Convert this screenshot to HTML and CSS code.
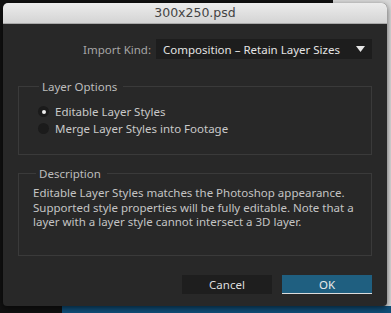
FILE: index.html
```html
<!DOCTYPE html>
<html lang="en">
<head>
  <meta charset="UTF-8">
  <meta name="viewport" content="width=device-width, initial-scale=1.0">
  <title>300x250.psd</title>
  <link rel="stylesheet" href="styles.css">
</head>
<body>
  <div class="window">
    <div class="titlebar">300x250.psd</div>
    <div class="content">
      <div class="import-row">
        <label for="kind">Import Kind:</label>
        <div class="select" id="kind">
          <span>Composition &ndash; Retain Layer Sizes</span>
          <svg class="caret" width="9" height="6" viewBox="0 0 9 6"><path d="M0 0 L9 0 L4.5 6 Z" fill="#e6e6e6"/></svg>
        </div>
      </div>

      <fieldset class="group options">
        <legend>Layer Options</legend>
        <label class="radio"><span class="dot checked"></span>Editable Layer Styles</label>
        <label class="radio"><span class="dot"></span>Merge Layer Styles into Footage</label>
      </fieldset>

      <fieldset class="group description">
        <legend>Description</legend>
        <p>Editable Layer Styles matches the Photoshop appearance. Supported style properties will be fully editable. Note that a layer with a layer style cannot intersect a 3D layer.</p>
      </fieldset>

      <div class="buttons">
        <button class="btn cancel">Cancel</button>
        <button class="btn ok">OK</button>
      </div>
    </div>
  </div>
</body>
</html>
```

FILE: styles.css
```css
html, body { margin: 0; height: 100%; }
body {
  overflow: hidden;
  font-family: "Noto Sans", "DejaVu Sans", sans-serif;
  background:
    linear-gradient(#0f4e78, #0f4e78) 62px 306px / 329px 7px no-repeat,
    linear-gradient(#d9d9d9, #d9d9d9) 333px 0 / 58px 306px no-repeat,
    #111;
}
.window {
  margin: 3px 0 0 3px;
  width: 384px;
  height: 303px;
  background: #282828;
  border-radius: 5px 5px 4px 4px;
  overflow: hidden;
  box-shadow: 0 2px 6px rgba(0,0,0,0.6);
  display: flex;
  flex-direction: column;
}
.titlebar {
  height: 20px;
  line-height: 20px;
  text-align: center;
  font-family: "DejaVu Sans", sans-serif;
  font-size: 12.5px;
  color: #444;
  background: linear-gradient(#ececec, #d4d4d4);
  border-bottom: 1px solid #a9a9a9;
}
.content { padding: 15px 15px 0 15px; flex: 1; display: flex; flex-direction: column; }

.import-row { display: flex; justify-content: flex-end; align-items: center; gap: 5px; }
.import-row label { color: #a6a6a6; font-size: 11.5px; }
.select {
  width: 216px;
  height: 20px;
  background: #1d1d1d;
  display: flex;
  align-items: center;
  justify-content: space-between;
  padding: 0 7px 0 7px;
  box-sizing: border-box;
  color: #e4e4e4;
  font-size: 11.5px;
}
.caret { display: block; }

.group {
  margin: 0;
  border: 1px solid #3a3a3a;
  padding: 0 0 0 17px;
  color: #c9c9c9;
  font-size: 11.5px;
}
.group legend { padding: 0 6px 0 3px; margin-left: 3px; color: #bdbdbd; font-size: 11.5px; }
.options { margin-top: 20px; height: 76px; padding-top: 9px; box-sizing: border-box; }
.radio { display: flex; align-items: center; height: 17px; }
.dot {
  width: 11px;
  height: 11px;
  border-radius: 50%;
  background: #1b1b1b;
  margin-right: 6px;
  margin-left: 2px;
  display: flex;
  align-items: center;
  justify-content: center;
}
.dot.checked::after { content: ""; width: 4px; height: 4px; border-radius: 50%; background: #eee; }

.description { margin-top: 11px; height: 90px; box-sizing: border-box; padding-left: 14px; padding-right: 10px; }
.description p { margin: 5px 0 0 0; line-height: 14.5px; color: #c4c4c4; }

.buttons { display: flex; justify-content: flex-end; gap: 10px; margin-top: 19px; }
.btn {
  width: 90px;
  height: 19px;
  border: none;
  font-family: inherit;
  font-size: 11.5px;
  padding: 0;
  color: #dedede;
}
.cancel { background: #1e1e1e; }
.ok { background: #1f5f80; border-bottom: 1px solid #dcdcdc; color: #eaeaea; }
```
